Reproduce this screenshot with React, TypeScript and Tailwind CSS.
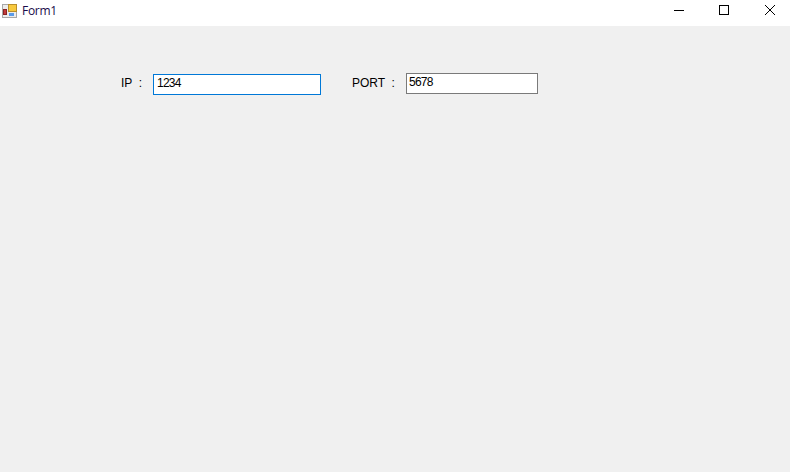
export default function App() {
  return (
    <div className="flex h-[472px] w-[790px] flex-col overflow-hidden bg-[#f0f0f0] font-['Liberation_Sans',sans-serif] text-[12px] text-black">
      {/* title bar */}
      <div className="flex h-[26px] items-start justify-between bg-white">
        <div className="flex items-center">
          <svg className="ml-[2px] mt-[2px]" width="16" height="16" viewBox="0 0 16 16">
            <rect x="0.5" y="1.5" width="14" height="13" fill="#ececec" stroke="#a8a8a8" />
            <rect x="6.5" y="1.5" width="8" height="7" fill="#f7c93e" stroke="#b98f2c" />
            <rect x="1.5" y="6.5" width="3" height="5" fill="#c23a3a" stroke="#8a2323" />
            <rect x="7" y="10" width="5" height="3" fill="#5b9be8" />
          </svg>
          <span className="ml-[4px] mt-[2px] font-['Open_Sans',sans-serif] text-[12px] leading-[18px] tracking-[-0.3px] text-[#1a0a4a]">Form1</span>
        </div>
        <div className="-mr-[3px] flex">
          <div className="flex h-[20px] w-[44px] items-center justify-center">
            <div className="h-px w-[10px] bg-black" />
          </div>
          <div className="flex h-[20px] w-[46px] items-center justify-center">
            <div className="h-[10px] w-[10px] border border-black" />
          </div>
          <div className="flex h-[20px] w-[46px] items-center justify-center">
            <svg width="10" height="10" viewBox="0 0 10 10" stroke="#000" fill="none">
              <path d="M0 0L10 10M10 0L0 10" />
            </svg>
          </div>
        </div>
      </div>

      {/* form */}
      <div className="flex items-start pl-[121px] pt-[47px]">
        <span className="mt-[1px] w-[32px] whitespace-pre leading-[18px]">IP  :</span>
        <div className="mt-px flex h-[21px] w-[168px] items-center border border-[#0078d7] bg-white pb-[3px] pl-[3px] leading-none tracking-[-0.75px]">
          1234
        </div>
        <span className="ml-[31px] mt-[1px] w-[54px] whitespace-pre leading-[18px]">PORT  :</span>
        <div className="flex h-[21px] w-[132px] items-center border border-[#7a7a7a] bg-white pb-[3px] pl-[2px] leading-none tracking-[-0.75px]">
          5678
        </div>
      </div>
    </div>
  );
}
